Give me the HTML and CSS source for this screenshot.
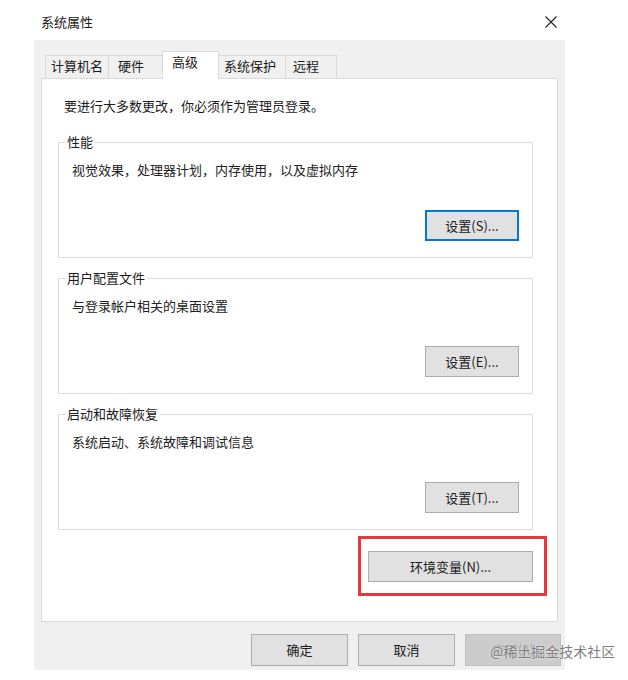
FILE: index.html
```html
<!DOCTYPE html>
<html lang="zh-CN">
  <head>
    <meta charset="UTF-8" />
    <meta name="viewport" content="width=device-width, initial-scale=1.0" />
    <title>系统属性</title>
    <link rel="stylesheet" href="styles.css">
  </head>
  <body>
    <div class="titlebar">
      <span class="title">系统属性</span>
      <svg class="close" width="12" height="12" viewBox="0 0 12 12">
        <path d="M0.5 0.5 L11.5 11.5 M11.5 0.5 L0.5 11.5" stroke="#222" stroke-width="1.1" fill="none" />
      </svg>
    </div>

    <div class="dialog">
      <div class="tabs">
        <div class="tab tab-name">计算机名</div>
        <div class="tab tab-hw">硬件</div>
        <div class="tab tab-adv active">高级</div>
        <div class="tab tab-protect">系统保护</div>
        <div class="tab tab-remote">远程</div>
      </div>

      <div class="panel">
        <p class="notice">要进行大多数更改，你必须作为管理员登录。</p>

        <fieldset class="group">
          <legend>性能</legend>
          <p class="desc">视觉效果，处理器计划，内存使用，以及虚拟内存</p>
          <div class="group-actions">
            <button class="btn btn-set btn-default">设置(S)...</button>
          </div>
        </fieldset>

        <fieldset class="group">
          <legend>用户配置文件</legend>
          <p class="desc">与登录帐户相关的桌面设置</p>
          <div class="group-actions">
            <button class="btn btn-set">设置(E)...</button>
          </div>
        </fieldset>

        <fieldset class="group group-last">
          <legend>启动和故障恢复</legend>
          <p class="desc">系统启动、系统故障和调试信息</p>
          <div class="group-actions">
            <button class="btn btn-set">设置(T)...</button>
          </div>
        </fieldset>

        <!-- red annotation around the env button -->
        <div class="highlight">
          <button class="btn btn-env">环境变量(N)...</button>
        </div>
      </div>

      <div class="footer">
        <button class="btn btn-footer">确定</button>
        <button class="btn btn-footer">取消</button>
        <button class="btn btn-footer btn-apply" disabled>应用(A)</button>
      </div>
    </div>

    <div class="watermark">@稀土掘金技术社区</div>
  </body>
</html>
```

FILE: styles.css
```css
body {
  margin: 0;
  background: #fff;
  font-family: "Noto Sans CJK SC", "Noto Sans", sans-serif;
  font-size: 13px;
  line-height: 18px;
  color: #1a1a1a;
  position: relative;
}
.titlebar {
  box-sizing: border-box;
  width: 628px;
  height: 40px;
  padding: 4px 71px 0 41px;
  display: flex;
  align-items: center;
  justify-content: space-between;
}
.close {
  display: block;
}
.dialog {
  box-sizing: border-box;
  margin-left: 34px;
  width: 531px;
  background: #f0f0f0;
  padding: 11px 7px 4px;
}
.tabs {
  display: flex;
  align-items: flex-end;
  height: 27px;
  padding-left: 4px;
  position: relative;
  z-index: 1;
}
.tab {
  box-sizing: border-box;
  height: 23px;
  padding: 1px 0 0 7px;
  margin-right: -1px;
  border: 1px solid #d9d9d9;
  border-bottom: none;
  background: #f0f0f0;
  white-space: nowrap;
}
.tab-name {
  width: 64px;
  padding-left: 5px;
}
.tab-hw {
  width: 57px;
  padding-left: 9px;
}
.tab-protect {
  width: 70px;
}
.tab-remote {
  width: 52px;
}
.tab.active {
  width: 57px;
  height: 28px;
  margin: 0 -3px -1px -2px;
  padding-left: 9px;
  background: #fff;
  position: relative;
  z-index: 2;
}
.panel {
  display: flex;
  flex-direction: column;
  background: #fff;
  border: 1px solid #d9d9d9;
  padding: 18px 24px 25px 16px;
}
.notice {
  margin: 0 0 18px 6px;
}
.group {
  margin: 0 0 11px;
  border: 1px solid #dcdcdc;
  padding: 0 13px 16px 13px;
  min-width: 0;
}
.group-last {
  margin-bottom: 6px;
}
.group legend {
  padding: 0 2px;
  margin-left: -7px;
  line-height: 18px;
}
.desc {
  margin: 10px 0 31px;
  color: #222;
}
.group-actions {
  display: flex;
  justify-content: flex-end;
}
.btn {
  box-sizing: border-box;
  font: inherit;
  color: #1a1a1a;
  background: #e1e1e1;
  border: 1px solid #adadad;
  padding: 0;
  margin: 0;
}
.btn-set {
  width: 94px;
  height: 31px;
}
.btn-default {
  border: 2px solid #0078d7;
}
.highlight {
  align-self: flex-end;
  margin-right: -14px;
  border: 3px solid #e8383d;
  padding: 12px 11px 11px 7px;
}
.btn-env {
  display: block;
  width: 165px;
  height: 31px;
}
.footer {
  display: flex;
  justify-content: flex-end;
  gap: 10px;
  padding-top: 12px;
  margin-right: -3px;
}
.btn-footer {
  width: 97px;
  height: 32px;
}
.btn-apply {
  width: 96px;
  background: #cccccc;
  border-color: #bfbfbf;
  color: #a0a0a0;
}
.watermark {
  position: absolute;
  left: 490px;
  top: 641px;
  font-size: 14px;
  line-height: 20px;
  color: #7d7d7d;
  text-shadow: 0 0 2px #fff;
}
```
